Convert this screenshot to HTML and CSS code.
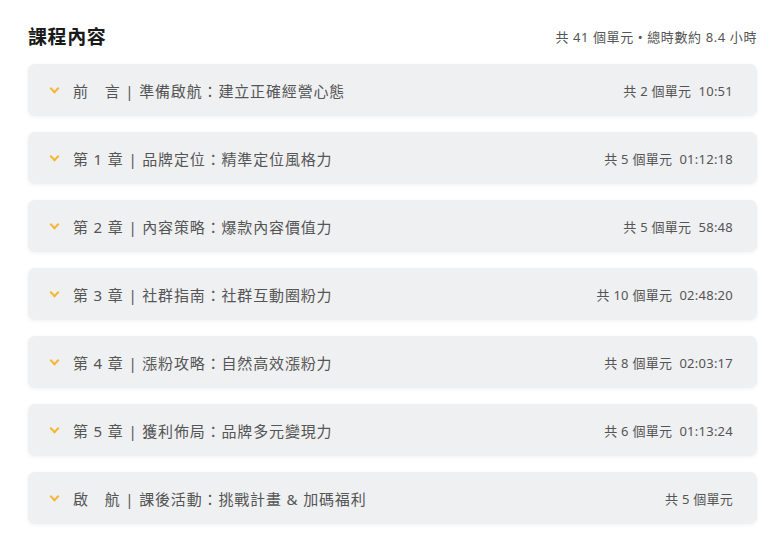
FILE: index.html
```html
<!DOCTYPE html>
<html>
<head>
	<meta charset="UTF-8">
	<link rel="stylesheet" href="styles.css">
</head>
<body>
	<div class="course">
		<div class="course_head">
			<h2 class="course_title">課程內容</h2>
			<span class="course_sum">共 41 個單元 • 總時數約 8.4 小時</span>
		</div>

		<div class="chapter">
			<span class="arrow"></span>
			<span class="chapter_name">前　言 | 準備啟航：建立正確經營心態</span>
			<span class="chapter_meta">共 2 個單元&nbsp;&nbsp;10:51</span>
		</div>
		<div class="chapter">
			<span class="arrow"></span>
			<span class="chapter_name">第 1 章 | 品牌定位：精準定位風格力</span>
			<span class="chapter_meta">共 5 個單元&nbsp;&nbsp;01:12:18</span>
		</div>
		<div class="chapter">
			<span class="arrow"></span>
			<span class="chapter_name">第 2 章 | 內容策略：爆款內容價值力</span>
			<span class="chapter_meta">共 5 個單元&nbsp;&nbsp;58:48</span>
		</div>
		<div class="chapter">
			<span class="arrow"></span>
			<span class="chapter_name">第 3 章 | 社群指南：社群互動圈粉力</span>
			<span class="chapter_meta">共 10 個單元&nbsp;&nbsp;02:48:20</span>
		</div>
		<div class="chapter">
			<span class="arrow"></span>
			<span class="chapter_name">第 4 章 | 漲粉攻略：自然高效漲粉力</span>
			<span class="chapter_meta">共 8 個單元&nbsp;&nbsp;02:03:17</span>
		</div>
		<div class="chapter">
			<span class="arrow"></span>
			<span class="chapter_name">第 5 章 | 獲利佈局：品牌多元變現力</span>
			<span class="chapter_meta">共 6 個單元&nbsp;&nbsp;01:13:24</span>
		</div>
		<div class="chapter">
			<span class="arrow"></span>
			<span class="chapter_name">啟　航 | 課後活動：挑戰計畫 &amp; 加碼福利</span>
			<span class="chapter_meta">共 5 個單元</span>
		</div>
	</div>
</body>
</html>
```

FILE: styles.css
```css
body{
	margin:0;
	background:#ffffff;
	font-family:"Noto Sans", "Noto Sans CJK TC", sans-serif;
	color:#4a4a4a;
}
.course{
	padding:22px 22px 0 28px;
}
.course_head{
	display:flex;
	justify-content:space-between;
	align-items:center;
	height:28px;
	margin-bottom:14px;
}
.course_title{
	margin:0;
	font-size:19px;
	font-weight:bold;
	letter-spacing:0.6px;
	color:#1a1a1a;
}
.course_sum{
	font-size:13px;
	letter-spacing:0.6px;
	color:#555555;
}
.chapter{
	display:flex;
	align-items:center;
	height:52px;
	margin-bottom:16px;
	padding:0 24px 0 21px;
	background:#eff0f2;
	border-radius:7px;
	box-shadow:0 1px 4px rgba(0,0,0,0.06);
}
.arrow{
	width:5px;
	height:5px;
	border-right:2px solid #f7b534;
	border-bottom:2px solid #f7b534;
	transform:rotate(45deg);
	margin:-4px 15px 0 2px;
}
.chapter_name{
	flex:1;
	font-size:15px;
	letter-spacing:0.85px;
	color:#555555;
}
.chapter_meta{
	font-size:13px;
	letter-spacing:0.25px;
	color:#555555;
}
```
